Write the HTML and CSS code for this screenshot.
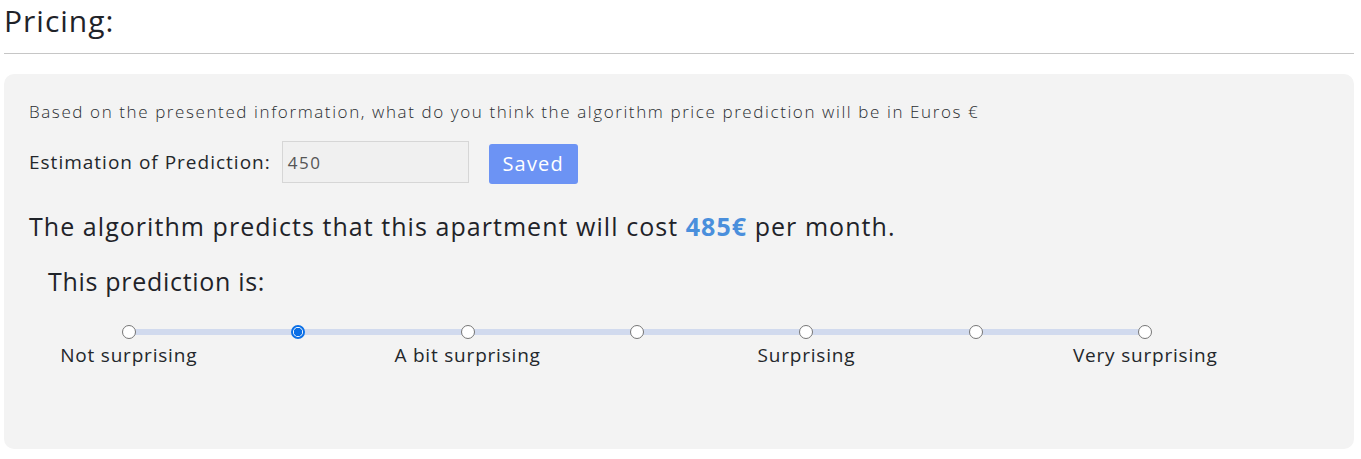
FILE: index.html
```html
<!DOCTYPE html>
<html lang="en">
<head>
<meta charset="utf-8">
<title>Pricing</title>
<link rel="stylesheet" href="styles.css">
</head>
<body>
<div class="page">
  <h2 class="title">Pricing:</h2>
  <hr class="rule">
  <section class="card">
    <p class="question">Based on the presented information, what do you think the algorithm price prediction will be in Euros €</p>
    <div class="estimate">
      <label class="estimate-label">Estimation of Prediction:</label>
      <div class="input">450</div>
      <button class="saved">Saved</button>
    </div>
    <p class="prediction">The algorithm predicts that this apartment will cost <span class="price">485€</span> per month.</p>
    <p class="sub">This prediction is:</p>
    <div class="scale">
      <div class="dots">
        <span class="dot"></span>
        <span class="dot checked"></span>
        <span class="dot"></span>
        <span class="dot"></span>
        <span class="dot"></span>
        <span class="dot"></span>
        <span class="dot"></span>
      </div>
      <div class="labels">
        <span class="lbl">Not surprising</span>
        <span class="lbl"></span>
        <span class="lbl">A bit surprising</span>
        <span class="lbl"></span>
        <span class="lbl">Surprising</span>
        <span class="lbl"></span>
        <span class="lbl">Very surprising</span>
      </div>
    </div>
  </section>
</div>
</body>
</html>
```

FILE: styles.css
```css
* { box-sizing: border-box; }
html, body { margin: 0; padding: 0; background: #ffffff; }
body {
  font-family: "Open Sans", "Liberation Sans", sans-serif;
  color: #212529;
}
.page {
  width: 1350px;
  margin-left: 4px;
}
.title {
  margin: 0;
  font-size: 30px;
  letter-spacing: 1px;
  font-weight: 400;
  line-height: 41px;
  height: 41px;
  color: #1f2329;
}
.rule {
  margin: 12px 0 0 0;
  border: 0;
  border-top: 1px solid #c6c6c6;
  height: 0;
}
.card {
  margin-top: 20px;
  background: #f3f3f3;
  border-radius: 10px;
  height: 375px;
  padding: 24px 25px 0 25px;
}
.question {
  margin: 0;
  font-size: 17px;
  letter-spacing: 1.6px;
  font-weight: 300;
  line-height: 28px;
  white-space: nowrap;
  color: #2a2d31;
}
.estimate {
  display: flex;
  align-items: center;
  margin-top: 15px;
  height: 42px;
}
.estimate-label {
  font-size: 19px;
  letter-spacing: 1px;
  font-weight: 400;
  white-space: nowrap;
  color: #23272b;
}
.input {
  margin-left: 11px;
  width: 187px;
  height: 42px;
  border: 1px solid #d6d6d6;
  background: #f0f0f0;
  font-size: 17px;
  letter-spacing: 1.5px;
  color: #555;
  padding: 0 5px;
  display: flex;
  align-items: center;
}
.saved {
  margin-left: 20px;
  margin-top: 3px;
  width: 89px;
  height: 40px;
  border: 0;
  border-radius: 3px;
  background: #6c93f4;
  color: #ffffff;
  font-family: inherit;
  font-size: 20px;
  letter-spacing: 1.2px;
  padding: 0;
}
.prediction {
  margin: 25px 0 0 0;
  font-size: 25px;
  letter-spacing: 1.05px;
  font-weight: 500;
  line-height: 36px;
  white-space: nowrap;
  color: #1f2329;
}
.price {
  color: #4a8fdc;
  font-weight: 700;
}
.sub {
  margin: 19px 0 0 19px;
  font-size: 25px;
  letter-spacing: 0.7px;
  font-weight: 500;
  line-height: 36px;
  color: #1f2329;
}
.scale {
  margin: 26px 0 0 15px;
  width: 1186px;
}
.dots {
  position: relative;
  display: grid;
  grid-template-columns: repeat(7, 1fr);
  height: 14px;
}
.dots::before {
  content: "";
  position: absolute;
  left: 84.7px;
  right: 84.7px;
  top: 4px;
  height: 6px;
  background: #d1daee;
}
.dot {
  position: relative;
  justify-self: center;
  width: 14px;
  height: 14px;
  border-radius: 50%;
  background: #ffffff;
  border: 1px solid #767676;
}
.dot.checked {
  border: 2px solid #0b6fe6;
  background: radial-gradient(circle, #0b6fe6 0 4px, #ffffff 4.5px);
}
.labels {
  display: grid;
  grid-template-columns: repeat(7, 1fr);
  margin-top: 3px;
}
.lbl {
  text-align: center;
  white-space: nowrap;
  font-size: 19px;
  letter-spacing: 0.8px;
  font-weight: 400;
  line-height: 26px;
  color: #23272b;
}
```
